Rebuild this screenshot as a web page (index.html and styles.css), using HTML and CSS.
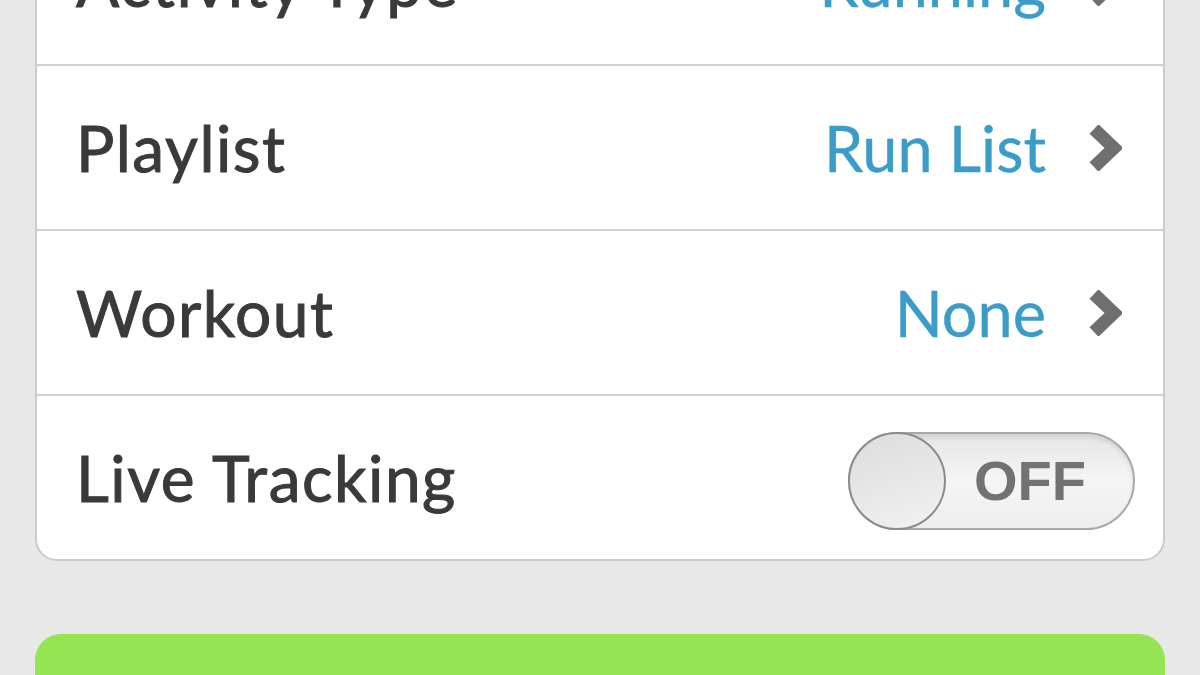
FILE: index.html
```html
<!DOCTYPE html>
<html lang="en">
<head>
    <meta charset="UTF-8">
    <meta name="viewport" content="width=device-width, initial-scale=1.0">
    <title>Workout Settings</title>
    <link rel="stylesheet" href="styles.css">
</head>
<body>
    <div class="screen">
        <div class="settings">
            <div class="row">
                <span class="label">Activity Type</span>
                <span class="value">Running</span>
                <svg class="chevron" viewBox="0 0 34 46"><polyline points="6,4 26,23 6,42"/></svg>
            </div>
            <div class="row">
                <span class="label">Playlist</span>
                <span class="value">Run List</span>
                <svg class="chevron" viewBox="0 0 34 46"><polyline points="6,4 26,23 6,42"/></svg>
            </div>
            <div class="row">
                <span class="label">Workout</span>
                <span class="value">None</span>
                <svg class="chevron" viewBox="0 0 34 46"><polyline points="6,4 26,23 6,42"/></svg>
            </div>
            <div class="row row-toggle">
                <span class="label">Live Tracking</span>
                <div class="toggle">
                    <div class="knob"></div>
                    <span class="toggle-text">OFF</span>
                </div>
            </div>
        </div>

        <!-- start button, only its top edge is on screen -->
        <button class="start"></button>
    </div>
</body>
</html>
```

FILE: styles.css
```css
body {
    margin: 0;
    background-color: #e8e8e8;
    font-family: Lato, "Open Sans", sans-serif;
    overflow: hidden;
}
.screen {
    padding: 0 35px;
    margin-top: -101px;
}
.settings {
    background: white;
    border: 2px solid #cbcbcb;
    border-radius: 22px;
}
.row {
    height: 163px;
    display: flex;
    align-items: center;
    padding: 0 41px 0 39px;
    border-bottom: 2px solid #d2d2d2;
}
.row:last-child {
    border-bottom: none;
}
.label {
    flex: 1;
    font-size: 64px;
    letter-spacing: 1.5px;
    color: #3a3a3a;
    -webkit-text-stroke: 1px #3a3a3a;
}
.value {
    font-size: 63px;
    color: #3c9cc8;
    -webkit-text-stroke: 0.4px #3c9cc8;
    margin-right: 42px;
}
.chevron {
    width: 34px;
    height: 46px;
}
.chevron polyline {
    fill: none;
    stroke: #6f6f6f;
    stroke-width: 13;
    stroke-linejoin: miter;
}
.row-toggle {
    padding-right: 28px;
}
.toggle {
    width: 283px;
    height: 94px;
    margin-top: 6px;
    border: 2px solid #a8a8a8;
    border-radius: 49px;
    background: linear-gradient(#e6e6e6, #f5f5f5 50%, #eeeeee);
    box-shadow: inset 0 4px 4px rgba(0,0,0,0.08);
    display: flex;
    align-items: center;
}
.knob {
    width: 94px;
    height: 94px;
    margin-left: -2px;
    border: 2px solid #8c8c8c;
    border-radius: 50%;
    background: linear-gradient(160deg, #dcdcdc, #f2f2f2);
}
.toggle-text {
    margin-left: 28px;
    font-family: "Liberation Sans", Arial, sans-serif;
    font-weight: bold;
    font-size: 56px;
    color: #727272;
}
.start {
    display: block;
    width: 100%;
    height: 110px;
    margin-top: 73px;
    border: none;
    border-radius: 26px;
    background-color: #95e553;
}
```
